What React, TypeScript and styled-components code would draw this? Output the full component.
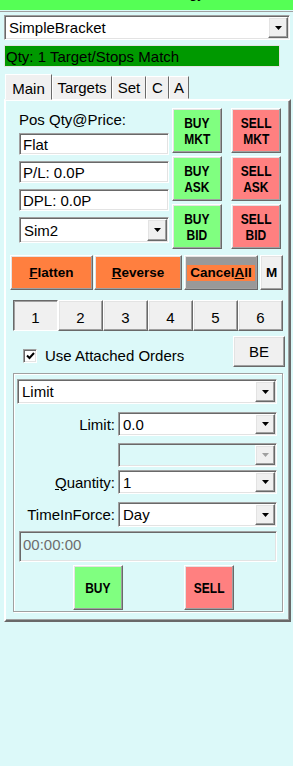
import React from 'react';
import styled, { createGlobalStyle, css } from 'styled-components';

const Global = createGlobalStyle`
  html, body { margin: 0; padding: 0; background: #DCF9F9; }
  body {
    font-family: "Liberation Sans", Arial, sans-serif;
    font-size: 15px;
    color: #000;
    width: 293px;
    height: 766px;
    overflow: hidden;
  }
  * { box-sizing: border-box; }
`;

const sunken = css`
  border: 1px solid;
  border-color: #A0A0A0 #FFFFFF #FFFFFF #A0A0A0;
  box-shadow: inset 1px 1px 0 #696969, inset -1px -1px 0 #E3E3E3;
`;

const raised = css`
  border: 1px solid;
  border-color: #FFFFFF #696969 #696969 #FFFFFF;
  box-shadow: inset -1px -1px 0 #A0A0A0, inset 1px 1px 0 #E3E3E3;
`;

const Page = styled.div`
  display: flex;
  flex-direction: column;
`;

const TitleBar = styled.div`
  height: 10px;
  background: #55FF55;
  overflow: hidden;
  display: flex;
  align-items: flex-start;
  padding-left: 149px;
`;

const TitleText = styled.span`
  margin-top: -15px;
  line-height: 15px;
  white-space: nowrap;
`;

const Rule = styled.div`
  margin-top: 1px;
  height: 1px;
  background: #A0A0A0;
`;

const Body = styled.div`
  display: flex;
  flex-direction: column;
  align-items: flex-start;
  padding: 0 2px 0 4px;
`;

const ComboBox = styled.div<{ $w: number; $h: number; $mt?: number; $disabled?: boolean }>`
  ${sunken};
  width: ${p => p.$w}px;
  height: ${p => p.$h}px;
  margin-top: ${p => p.$mt ?? 0}px;
  background: ${p => (p.$disabled ? 'transparent' : '#FFFFFF')};
  display: flex;
  align-items: stretch;
  padding: 1px;
`;

const ComboText = styled.div`
  flex: 1;
  display: flex;
  align-items: center;
  padding-left: 3px;
  white-space: nowrap;
  overflow: hidden;
`;

const DropBtn = styled.div`
  ${raised};
  width: 20px;
  background: #F0F0F0;
  display: flex;
  align-items: center;
  justify-content: center;
`;

const Arrow = ({ disabled }: { disabled?: boolean }) => (
  <svg width="7" height="4" viewBox="0 0 7 4">
    <polygon points="0,0 7,0 3.5,4" fill={disabled ? '#A0A0A0' : '#000'} />
  </svg>
);

const Combo = ({ w, h, mt, value, disabled }: { w: number; h: number; mt?: number; value?: string; disabled?: boolean }) => (
  <ComboBox $w={w} $h={h} $mt={mt} $disabled={disabled}>
    <ComboText>{value}</ComboText>
    <DropBtn>
      <Arrow disabled={disabled} />
    </DropBtn>
  </ComboBox>
);

const Status = styled.div`
  margin-top: 5px;
  width: 276px;
  height: 22px;
  background: #009900;
  border: 1px solid #E3E3E3;
  display: flex;
  align-items: center;
  padding-left: 1px;
  white-space: nowrap;
`;

const TabStrip = styled.div`
  margin-top: 5px;
  height: 27px;
  display: flex;
  align-items: flex-end;
  padding-left: 1px;
  position: relative;
  z-index: 1;
`;

const Tab = styled.div<{ $w: number; $active?: boolean }>`
  width: ${p => p.$w}px;
  height: ${p => (p.$active ? 26 : 23)}px;
  margin-bottom: ${p => (p.$active ? -1 : 0)}px;
  background: #F0F0F0;
  border: 1px solid;
  border-color: #FFFFFF #696969 transparent #FFFFFF;
  display: flex;
  align-items: ${p => (p.$active ? 'flex-start' : 'center')};
  padding-top: ${p => (p.$active ? 5 : 0)}px;
  justify-content: center;
  white-space: nowrap;
`;

const Panel = styled.div`
  width: 287px;
  height: 523px;
  border: 2px solid;
  border-color: #FFFFFF #696969 #696969 #FFFFFF;
  box-shadow: inset -1px -1px 0 #A0A0A0;
  background: #DCF9F9;
  padding: 0 6px 0 7px;
  display: flex;
  flex-direction: column;
  align-items: flex-start;
`;

const TopSection = styled.div`
  display: flex;
  align-items: flex-start;
`;

const LeftCol = styled.div`
  margin-left: 6px;
  margin-top: 10px;
  width: 150px;
  display: flex;
  flex-direction: column;
`;

const FieldLabel = styled.div`
  line-height: 17px;
  height: 17px;
`;

const TextBox = styled.div<{ $mt: number }>`
  ${sunken};
  margin-top: ${p => p.$mt}px;
  height: 22px;
  background: #FFFFFF;
  display: flex;
  align-items: center;
  padding-left: 3px;
`;

const ButtonGrid = styled.div`
  margin-left: 3px;
  margin-top: 7px;
  display: grid;
  grid-template-columns: 50px 50px;
  grid-auto-rows: 45px;
  column-gap: 9px;
  row-gap: 3px;
`;

const ColorBtn = styled.div<{ $bg: string }>`
  ${raised};
  background: ${p => p.$bg};
  display: flex;
  flex-direction: column;
  align-items: center;
  justify-content: center;
  font-weight: bold;
  font-size: 15px;
  line-height: 16px;
  padding-top: 1px;
`;

const NarrowLine = styled.span`
  display: block;
  white-space: nowrap;
  transform: scaleX(0.8);
`;

const ActionRow = styled.div`
  margin-top: 6px;
  margin-left: -3px;
  height: 35px;
  display: flex;
  gap: 1px;
`;

const ActionBtn = styled.div<{ $w: number; $bg: string; $ml?: number }>`
  ${raised};
  width: ${p => p.$w}px;
  margin-left: ${p => p.$ml ?? 0}px;
  background: ${p => p.$bg};
  display: flex;
  align-items: center;
  justify-content: center;
  font-weight: bold;
  font-size: 13.5px;
  white-space: nowrap;
`;

const Highlight = styled.span`
  background: #FF7F3F;
  padding: 1px 3px;
  line-height: 14px;
`;

const NumRow = styled.div`
  margin-top: 10px;
  display: flex;
`;

const NumCell = styled.div<{ $active?: boolean }>`
  width: 45px;
  height: 31px;
  background: #F0F0F0;
  display: flex;
  align-items: center;
  justify-content: center;
  padding-top: 3px;
  ${p =>
    p.$active
      ? css`
          border: 1px solid;
          border-color: #696969 #FFFFFF #FFFFFF #696969;
          box-shadow: inset 1px 1px 0 #A0A0A0;
        `
      : raised}
`;

const CheckRow = styled.div`
  margin-top: 5px;
  width: 272px;
  display: flex;
  align-items: flex-end;
`;

const CheckBox = styled.div`
  margin-left: 10px;
  margin-bottom: 4px;
  width: 14px;
  height: 14px;
  ${sunken};
  background: #FFFFFF;
  display: flex;
  align-items: center;
  justify-content: center;
`;

const CheckLabel = styled.div`
  margin-left: 8px;
  margin-bottom: 3px;
  flex: 1;
`;

const BEButton = styled.div`
  ${raised};
  width: 52px;
  height: 31px;
  background: #F0F0F0;
  display: flex;
  align-items: center;
  justify-content: center;
`;

const GroupBox = styled.div`
  margin-top: 6px;
  width: 270px;
  height: 239px;
  border: 1px solid #A0A0A0;
  box-shadow: inset 1px 1px 0 #FFFFFF, 1px 1px 0 #FFFFFF;
  padding: 5px 0 0 3px;
  display: flex;
  flex-direction: column;
  align-items: flex-start;
`;

const FormRow = styled.div<{ $mt: number }>`
  margin-top: ${p => p.$mt}px;
  display: flex;
  align-items: center;
`;

const RowLabel = styled.div`
  width: 101px;
  text-align: right;
  padding-right: 3px;
  white-space: nowrap;
`;

const TimeBox = styled.div`
  ${sunken};
  margin-top: 4px;
  margin-left: 2px;
  width: 258px;
  height: 31px;
  padding: 4px 0 0 3px;
  color: #6D6D6D;
`;

const OrderRow = styled.div`
  margin-top: 3px;
  margin-left: 56px;
  display: flex;
  gap: 61px;
`;

const OrderBtn = styled(ColorBtn)`
  width: 50px;
  height: 45px;
`;

const U = styled.span`
  text-decoration: underline;
`;

const TwoLine = ({ a, b }: { a: string; b: string }) => (
  <>
    <NarrowLine>{a}</NarrowLine>
    <NarrowLine>{b}</NarrowLine>
  </>
);

export default function App() {
  return (
    <Page>
      <Global />
      <TitleBar>
        <TitleText>Strategy</TitleText>
      </TitleBar>
      <Rule />
      <Body>
        <Combo w={286} h={25} mt={3} value="SimpleBracket" />
        <Status>Qty: 1 Target/Stops Match</Status>
        <TabStrip>
          <Tab $w={47} $active>Main</Tab>
          <Tab $w={60}>Targets</Tab>
          <Tab $w={34}>Set</Tab>
          <Tab $w={23}>C</Tab>
          <Tab $w={20}>A</Tab>
        </TabStrip>
        <Panel>
          <TopSection>
            <LeftCol>
              <FieldLabel>Pos Qty@Price:</FieldLabel>
              <TextBox $mt={5}>Flat</TextBox>
              <TextBox $mt={6}>P/L: 0.0P</TextBox>
              <TextBox $mt={6}>DPL: 0.0P</TextBox>
              <Combo w={150} h={26} mt={6} value="Sim2" />
            </LeftCol>
            <ButtonGrid>
              <ColorBtn $bg="#80FF80"><TwoLine a="BUY" b="MKT" /></ColorBtn>
              <ColorBtn $bg="#FF8080"><TwoLine a="SELL" b="MKT" /></ColorBtn>
              <ColorBtn $bg="#80FF80"><TwoLine a="BUY" b="ASK" /></ColorBtn>
              <ColorBtn $bg="#FF8080"><TwoLine a="SELL" b="ASK" /></ColorBtn>
              <ColorBtn $bg="#80FF80"><TwoLine a="BUY" b="BID" /></ColorBtn>
              <ColorBtn $bg="#FF8080"><TwoLine a="SELL" b="BID" /></ColorBtn>
            </ButtonGrid>
          </TopSection>
          <ActionRow>
            <ActionBtn $w={83} $bg="#FF7F3F"><U>F</U>latten</ActionBtn>
            <ActionBtn $w={88} $bg="#FF7F3F"><U>R</U>everse</ActionBtn>
            <ActionBtn $w={74} $bg="#999999" $ml={1}><Highlight>Cancel<U>A</U>ll</Highlight></ActionBtn>
            <ActionBtn $w={23} $bg="#F0F0F0" $ml={1}>M</ActionBtn>
          </ActionRow>
          <NumRow>
            <NumCell $active>1</NumCell>
            <NumCell>2</NumCell>
            <NumCell>3</NumCell>
            <NumCell>4</NumCell>
            <NumCell>5</NumCell>
            <NumCell>6</NumCell>
          </NumRow>
          <CheckRow>
            <CheckBox>
              <svg width="9" height="8" viewBox="0 0 9 8">
                <path d="M1 3.5 L3.5 6 L8 1" stroke="#000" strokeWidth="2" fill="none" />
              </svg>
            </CheckBox>
            <CheckLabel>Use Attached Orders</CheckLabel>
            <BEButton>BE</BEButton>
          </CheckRow>
          <GroupBox>
            <Combo w={260} h={25} value="Limit" />
            <FormRow $mt={8}>
              <RowLabel>Limit:</RowLabel>
              <Combo w={159} h={24} value="0.0" />
            </FormRow>
            <FormRow $mt={7}>
              <RowLabel />
              <Combo w={159} h={24} disabled />
            </FormRow>
            <FormRow $mt={3}>
              <RowLabel><U>Q</U>uantity:</RowLabel>
              <Combo w={159} h={24} value="1" />
            </FormRow>
            <FormRow $mt={8}>
              <RowLabel>TimeInForce:</RowLabel>
              <Combo w={159} h={25} value="Day" />
            </FormRow>
            <TimeBox>00:00:00</TimeBox>
            <OrderRow>
              <OrderBtn $bg="#80FF80"><NarrowLine>BUY</NarrowLine></OrderBtn>
              <OrderBtn $bg="#FF8080"><NarrowLine>SELL</NarrowLine></OrderBtn>
            </OrderRow>
          </GroupBox>
        </Panel>
      </Body>
    </Page>
  );
}
